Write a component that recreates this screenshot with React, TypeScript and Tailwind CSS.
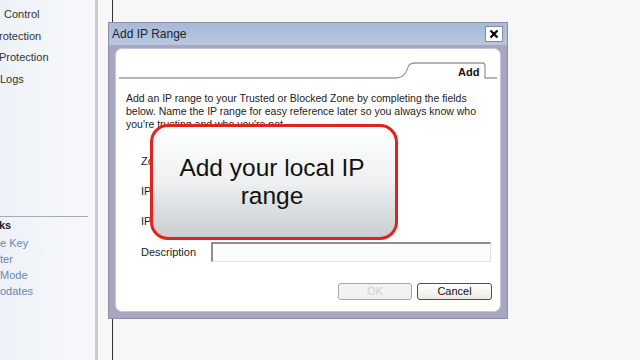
import React from "react";

const sideItems = ["Control", "rotection", "Protection", "Logs"];
const linkItems = ["e Key", "ter", "Mode", "odates"];

const Sidebar: React.FC = () => (
  <div className="w-[98px] h-full bg-gradient-to-r from-[#eef2f8] to-[#f6f8fb] border-r-[3px] border-[#c9cbd0] flex flex-col">
    <div className="pt-[7px] flex flex-col gap-[7.7px] pl-[5px] -ml-[1px]">
      {sideItems.map((t, i) => (
        <div key={t} className={`text-[11px] leading-[14px] text-[#333] whitespace-nowrap ${i === 1 || i === 2 ? "-ml-[5px]" : i === 3 ? "-ml-[4px]" : ""}`}>
          {t}
        </div>
      ))}
    </div>
    <div className="mt-[130px] mr-[7px] h-px bg-[#a8acb2]" />
    <div className="mt-px text-[11px] leading-[14px] font-bold text-[#222] -ml-px">ks</div>
    <div className="mt-[4px] flex flex-col gap-[2px] text-[11px] leading-[14px] text-[#6b84b3]">
      {linkItems.map((t) => (
        <div key={t} className="whitespace-nowrap">{t}</div>
      ))}
    </div>
  </div>
);

const AddIpDialog: React.FC = () => (
  <div className="absolute left-[108px] top-[22px] w-[400px] h-[297px] bg-[#a7a7c0] border border-[#8e8ea8] flex flex-col">
    {/* title bar */}
    <div className="h-[22px] bg-gradient-to-b from-[#a6bad9] to-[#b7c7e0] flex items-center justify-between pl-[3px] pr-[4px]">
      <span className="text-[12px] text-[#1c2430]">Add IP Range</span>
      <div className="w-[18px] h-[16px] bg-white border border-[#8a8a9a] flex items-center justify-center">
        <svg width="10" height="10" viewBox="0 0 10 10">
          <path d="M1.5 1.5 L8.5 8.5 M8.5 1.5 L1.5 8.5" stroke="#000" strokeWidth="2.2" />
        </svg>
      </div>
    </div>
    {/* body */}
    <div className="flex-1 px-[6px] pt-[3px] pb-[6px]">
      <div className="relative h-full bg-white rounded-[7px] border border-[#c6c6d6]">
        {/* tab header */}
        <svg className="absolute left-[3px] top-[13px]" width="380" height="18" viewBox="0 0 380 18">
          <path
            d="M0 16 L276 16 Q284 16 287 10 L290 3 Q292 1 296 1 L364 1 Q366 1 366 5 L366 16 L378 16"
            fill="none"
            stroke="#9a9aa4"
            strokeWidth="1.3"
          />
        </svg>
        <div className="absolute left-[342px] top-[15px] text-[11px] font-bold text-[#111]">Add</div>
        <div className="pt-[43px] pl-[10px] pr-[4px] text-[10.5px] leading-[13px] text-[#222] whitespace-nowrap">
          <p>Add an IP range to your Trusted or Blocked Zone by completing the fields</p>
          <p>below. Name the IP range for easy reference later so you always know who</p>
          <p>you're trusting and who you're not.</p>
        </div>
        <div className="pl-[25px] mt-[23px] flex flex-col text-[11px] text-[#222]">
          <div className="h-[30px] leading-[14px]">Zone</div>
          <div className="h-[30px] leading-[14px]">IP</div>
          <div className="h-[30px] leading-[14px]">IP</div>
          <div className="flex items-center -mt-[2px]">
            <span className="w-[70px]">Description</span>
            <div className="w-[280px] h-[20px] border-t-2 border-l-2 border-[#8d8d8d] border-r border-b border-r-[#e4e4e4] border-b-[#e4e4e4] bg-[#fbfbfb]" />
          </div>
        </div>
        <div className="absolute right-[8px] bottom-[11px] flex gap-[5px]">
          <div className="w-[74px] h-[17px] rounded-[3px] border border-[#a4a6ac] bg-[#f2f2f2] flex items-center justify-center text-[11px] text-[#d0d0d0]">
            OK
          </div>
          <div className="w-[75px] h-[17px] rounded-[3px] border border-[#4a4e58] bg-gradient-to-b from-white to-[#eceae4] flex items-center justify-center text-[11px] text-[#111]">
            Cancel
          </div>
        </div>
      </div>
    </div>
  </div>
);

const Callout: React.FC = () => (
  <div className="absolute left-[150px] top-[124px] w-[248px] h-[116px] rounded-[18px] border-[3px] border-[#e2221e] bg-gradient-to-b from-[#ffffff] via-[#eef0f1] to-[#c9ced2] flex flex-col items-center justify-center">
    <div className="text-[24.5px] leading-[28px] text-[#111] text-center -ml-[4px]">
      Add your local IP
      <br />
      range
    </div>
  </div>
);

export default function App() {
  return (
    <div
      className="relative w-[640px] h-[360px] overflow-hidden bg-[#f7f7f7] flex"
      style={{ fontFamily: '"Liberation Sans", Arial, sans-serif' }}
    >
      <Sidebar />
      <div className="flex-1 relative">
        <div className="absolute left-[14px] top-0 w-px h-full bg-[#333]" />
      </div>
      <AddIpDialog />
      <Callout />
    </div>
  );
}
